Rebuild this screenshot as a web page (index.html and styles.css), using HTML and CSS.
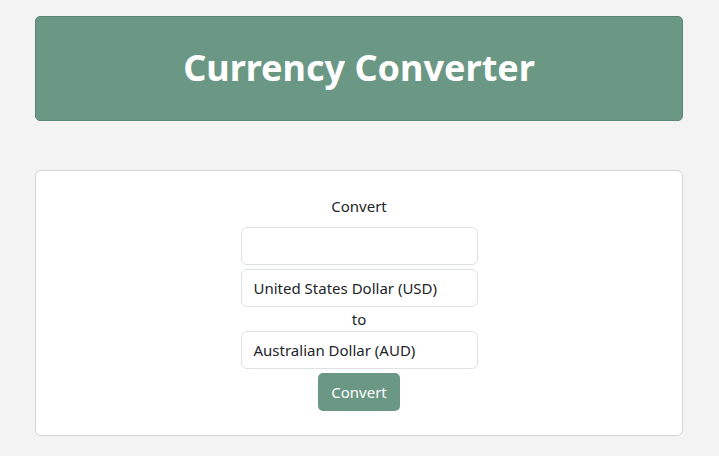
FILE: index.html
```html
<!DOCTYPE html>
<html>
<head>
<meta charset="utf-8">
<link rel="stylesheet" href="styles.css">
</head>
<body>
<div class="page">
  <header class="banner"><h1 class="title">Currency Converter</h1></header>
  <main class="card">
    <form class="form">
      <label class="label label-top">Convert</label>
      <input class="field" type="text">
      <div class="field select">United States Dollar (USD)</div>
      <span class="label label-mid">to</span>
      <div class="field select">Australian Dollar (AUD)</div>
      <button class="btn" type="button">Convert</button>
    </form>
  </main>
</div>
</body>
</html>
```
FILE: styles.css
```css
* { box-sizing: border-box; }
body {
  margin: 0;
  background: #f3f3f3;
  font-family: "Noto Sans", "Open Sans", sans-serif;
  color: #212529;
}
.page {
  padding: 16px 36px 0 35px;
  display: flex;
  flex-direction: column;
  gap: 49px;
}
.banner {
  height: 105px;
  background: #6b9884;
  border: 1px solid #5a8571;
  border-radius: 5px;
  display: flex;
  align-items: center;
  justify-content: center;
}
.title {
  margin: 0 0 2px;
  color: #fff;
  font-size: 36px;
  font-weight: 700;
  letter-spacing: 0;
}
.card {
  height: 266px;
  background: #fff;
  border: 1px solid #d4d4d4;
  border-radius: 6px;
  padding: 26px 0 0;
}
.form {
  display: flex;
  flex-direction: column;
  align-items: center;
  gap: 4px;
}
.label {
  font-size: 15px;
  line-height: 22px;
  height: 22px;
}
.label-top { margin-bottom: 6px; margin-top: -2px; }
.label-mid {
  height: 16px;
  line-height: 16px;
}
.field {
  width: 237px;
  height: 38px;
  border: 1px solid #dee2e6;
  border-radius: 6px;
  background: #fff;
  font: inherit;
  font-size: 15px;
  padding: 0 12px;
  outline: none;
}
.select {
  display: flex;
  align-items: center;
}
.btn {
  height: 38px;
  width: 82px;
  border: none;
  border-radius: 5px;
  background: #6b9884;
  color: #fff;
  font: inherit;
  font-size: 15px;
}
```
